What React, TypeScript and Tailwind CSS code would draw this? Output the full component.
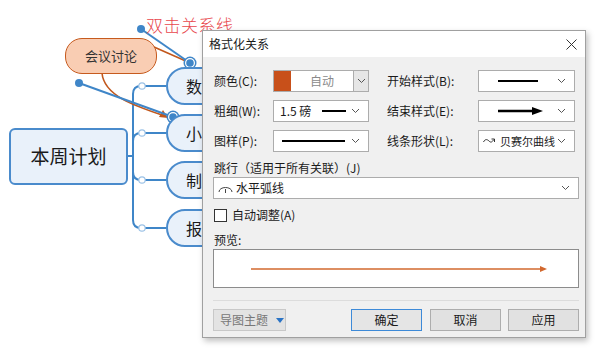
import React from 'react';

const font = { fontFamily: '"Noto Sans CJK SC", "Microsoft YaHei", sans-serif' };

const Chevron = () => (
  <svg width="9" height="6" viewBox="0 0 9 6" className="shrink-0">
    <polyline points="1,1 4.5,4.5 8,1" fill="none" stroke="#555" strokeWidth="1" />
  </svg>
);

// combo box used in the dialog grid
const Combo = ({ children, className = '' }: { children?: React.ReactNode; className?: string }) => (
  <div className={`flex items-center h-[22px] bg-white border border-[#acacac] pr-[8px] ${className}`}>
    <div className="flex-1 flex items-center h-full min-w-0 whitespace-nowrap">{children}</div>
    <Chevron />
  </div>
);

const Label = ({ children, w }: { children: React.ReactNode; w: string }) => (
  <div className={`${w} text-[12px] leading-[22px] text-[#1a1a1a] whitespace-nowrap`}>{children}</div>
);

const MindMap = () => (
  <>
    <svg className="absolute left-0 top-0" width="600" height="353">
      {/* branches */}
      <g fill="none" stroke="#3f86c8" strokeWidth="2">
        <path d="M127,156 H133" />
        <path d="M166,86 H141 Q133,86 133,94 V220 Q133,228 141,228 H166" />
        <path d="M133,141 Q133,133 141,133 H166" />
        <path d="M133,172 Q133,180 141,180 H166" />
      </g>
      {[86, 133, 180, 228].map((y) => (
        <circle key={y} cx="142" cy={y} r="3.2" fill="#fff" stroke="#9cc2e6" strokeWidth="1.2" />
      ))}
      {/* relationship */}
      <g fill="none" stroke="#c2571c" strokeWidth="1.6">
        <path d="M154,47 L188,62" />
        <path d="M102,73 C104,96 135,106 165,116" />
      </g>
      <polygon points="168,118 159,117 163,110" fill="#c2571c" />
      <g stroke="#3f86c8" strokeWidth="2">
        <line x1="141" y1="29" x2="190" y2="63" />
        <line x1="79" y1="83" x2="173" y2="117" />
      </g>
      <circle cx="141" cy="29" r="4" fill="#3f86c8" />
      <circle cx="79" cy="83" r="4" fill="#3f86c8" />
      {[[190, 63], [173, 117]].map(([x, y]) => (
        <g key={x}>
          <circle cx={x} cy={y} r="6.5" fill="#3f86c8" />
          <circle cx={x} cy={y} r="5" fill="#fff" />
          <circle cx={x} cy={y} r="3.8" fill="#3f86c8" />
        </g>
      ))}
    </svg>

    <div className="absolute left-[146px] top-[13px] text-[17px] leading-[24px] text-[#e8464c] font-light tracking-[0.5px]">
      双击关系线
    </div>

    <div className="absolute left-[65px] top-[38px] w-[92px] h-[36px] rounded-[17px] bg-[#f9cdb3] border-[1.5px] border-[#c65a1e] flex items-center justify-center text-[13px] text-[#333]">
      会议讨论
    </div>

    <div className="absolute left-[9px] top-[128px] w-[119px] h-[57px] rounded-[6px] bg-[#e9f1fa] border-2 border-[#4a8bcc] flex items-center justify-center text-[19px] text-[#1a1a1a]">
      本周计划
    </div>

    {[
      { t: '数', y: 'top-[67px]' },
      { t: '小', y: 'top-[114px]' },
      { t: '制', y: 'top-[161px]' },
      { t: '报', y: 'top-[209px]' },
    ].map((n) => (
      <div
        key={n.t}
        className={`absolute left-[166px] ${n.y} w-[80px] h-[38px] rounded-[19px] bg-[#e9f1fa] border-2 border-[#4a8bcc] flex items-center pl-[18px] text-[16px] text-[#1a1a1a]`}
      >
        {n.t}
      </div>
    ))}
  </>
);

const Dialog = () => (
  <div className="absolute left-[202px] top-[30px] w-[384px] h-[308px] border border-[#a0a0a0] bg-[#f0f0f0] shadow-[2px_3px_6px_rgba(0,0,0,0.25)] flex flex-col">
    <div className="h-[26px] bg-white flex items-center justify-between pl-[6px] pr-[8px]">
      <span className="text-[12px] text-[#1a1a1a]">格式化关系</span>
      <svg width="11" height="11" viewBox="0 0 11 11">
        <path d="M0.5,0.5 L10.5,10.5 M10.5,0.5 L0.5,10.5" stroke="#333" strokeWidth="1" />
      </svg>
    </div>

    <div className="flex-1 flex flex-col pl-[10px] pr-[8px] pt-[13px]">
      <div className="flex flex-col gap-[8px] pl-[1px]">
        <div className="flex items-center">
          <Label w="w-[59px]">颜色(C):</Label>
          <div className="w-[96px] h-[22px] flex items-stretch bg-white border border-[#acacac]">
            <div className="w-[17px] bg-[#c8501a]" />
            <div className="flex-1 flex items-center justify-center text-[12px] text-[#8a8a8a]">自动</div>
            <div className="w-[15px] bg-[#e6e6e6] border-l border-[#acacac] flex items-center justify-center">
              <Chevron />
            </div>
          </div>
          <div className="w-[18px]" />
          <Label w="w-[91px]">开始样式(B):</Label>
          <Combo className="w-[97px]">
            <div className="ml-[19px] w-[40px] h-[2.5px] bg-black" />
          </Combo>
        </div>

        <div className="flex items-center">
          <Label w="w-[59px]">粗细(W):</Label>
          <Combo className="w-[96px]">
            <span className="ml-[6px] text-[12px] text-[#1a1a1a]">1.5 磅</span>
            <div className="ml-[11px] w-[24px] h-[2px] bg-black" />
          </Combo>
          <div className="w-[18px]" />
          <Label w="w-[91px]">结束样式(E):</Label>
          <Combo className="w-[97px]">
            <svg className="ml-[19px]" width="46" height="10" viewBox="0 0 46 10">
              <line x1="0" y1="5" x2="36" y2="5" stroke="#000" strokeWidth="2.5" />
              <polygon points="34,1 45,5 34,9" fill="#000" />
            </svg>
          </Combo>
        </div>

        <div className="flex items-center">
          <Label w="w-[59px]">图样(P):</Label>
          <Combo className="w-[96px]">
            <div className="ml-[8px] w-[63px] h-[2.5px] bg-black" />
          </Combo>
          <div className="w-[18px]" />
          <Label w="w-[91px]">线条形状(L):</Label>
          <Combo className="w-[97px]">
            <svg className="ml-[4px] shrink-0" width="14" height="8" viewBox="0 0 14 8">
              <path d="M0.5,5 C2,2 4,2 6,4 C8,6 9,5 11,2.5" fill="none" stroke="#333" strokeWidth="1" />
              <path d="M8.5,2 L11.5,2 L11.5,5" fill="none" stroke="#333" strokeWidth="1" />
            </svg>
            <span className="ml-[3px] text-[11px] text-[#1a1a1a]">贝赛尔曲线</span>
          </Combo>
        </div>
      </div>

      <div className="mt-[7px] pl-[1px] text-[12px] leading-[18px] text-[#1a1a1a]">跳行（适用于所有关联）(J)</div>
      <Combo className="w-[366px]">
        <svg className="ml-[4px]" width="15" height="10" viewBox="0 0 15 10">
          <path d="M1,9 C1,3 14,3 14,9" fill="none" stroke="#444" strokeWidth="1" />
          <line x1="7.5" y1="6" x2="7.5" y2="10" stroke="#444" strokeWidth="1" />
        </svg>
        <span className="ml-[3px] text-[12px] text-[#1a1a1a]">水平弧线</span>
      </Combo>

      <div className="mt-[7px] flex items-center gap-[5px] pl-[1px]">
        <div className="w-[13px] h-[13px] bg-white border border-[#333]" />
        <span className="text-[12px] leading-[18px] text-[#1a1a1a]">自动调整(A)</span>
      </div>

      <div className="mt-[7px] pl-[1px] text-[12px] leading-[18px] text-[#1a1a1a]">预览:</div>
      <div className="w-[366px] h-[39px] bg-white border border-[#8c8c8c] flex items-center">
        <svg className="ml-[37px]" width="300" height="8" viewBox="0 0 300 8">
          <line x1="0" y1="4" x2="290" y2="4" stroke="#d2682e" strokeWidth="1.6" />
          <polygon points="289,1 296,4 289,7" fill="#d2682e" />
        </svg>
      </div>

      <div className="mt-[12px] w-[366px] h-px bg-[#dcdcdc]" />

      <div className="mt-[8px] w-[366px] flex items-center">
        <div className="w-[73px] h-[22px] bg-[#e3e3e3] border border-[#c8c8c8] flex items-center pl-[6px] gap-[8px]">
          <span className="text-[12px] text-[#777]">导图主题</span>
          <svg width="8" height="5" viewBox="0 0 8 5">
            <polygon points="0,0 8,0 4,5" fill="#2a73c5" />
          </svg>
        </div>
        <div className="flex-1" />
        <div className="w-[71px] h-[22px] bg-[#e5e5e5] border border-[#3d8ad8] flex items-center justify-center text-[12px] text-[#1a1a1a]">确定</div>
        <div className="ml-[8px] w-[71px] h-[22px] bg-[#e1e1e1] border border-[#adadad] flex items-center justify-center text-[12px] text-[#1a1a1a]">取消</div>
        <div className="ml-[7px] w-[71px] h-[22px] bg-[#e1e1e1] border border-[#adadad] flex items-center justify-center text-[12px] text-[#1a1a1a]">应用</div>
      </div>
    </div>
  </div>
);

export default function App() {
  return (
    <div className="relative w-[600px] h-[353px] bg-white overflow-hidden" style={font}>
      <MindMap />
      <Dialog />
    </div>
  );
}
